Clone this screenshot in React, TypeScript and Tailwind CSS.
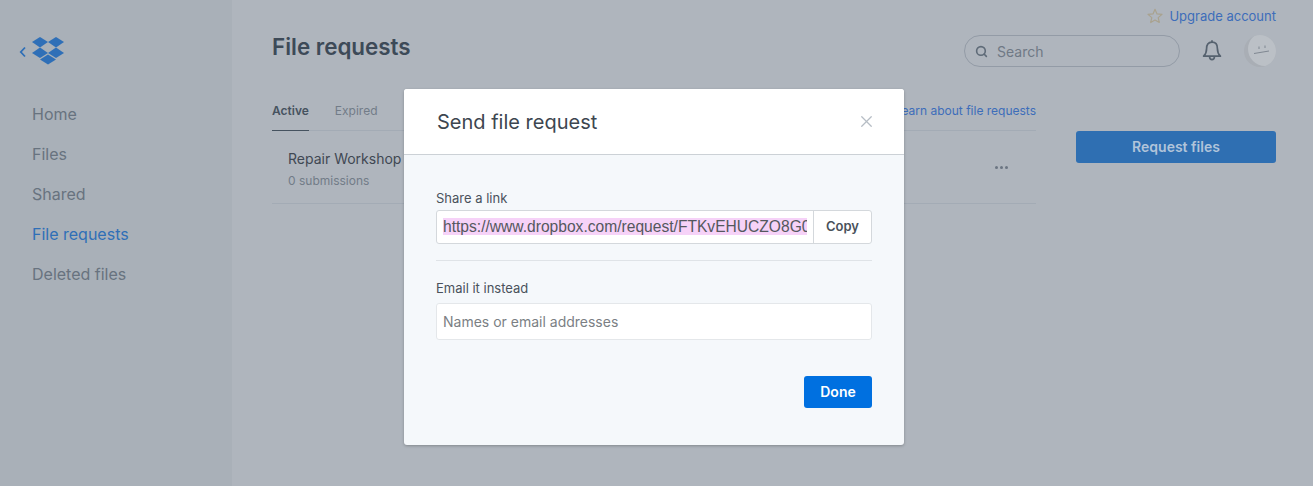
import { Search, X } from 'lucide-react';

const navItems = ['Home', 'Files', 'Shared', 'File requests', 'Deleted files'];

function DropboxLogo() {
  return (
    <svg width="32" height="28" viewBox="0 0 32 28" fill="#2f6fb7">
      <polygon points="8,0 16,5 8,10.5 0,5" />
      <polygon points="24,0 32,5 24,10.5 16,5" />
      <polygon points="8,10.5 16,16 8,21 0,16" />
      <polygon points="24,10.5 32,16 24,21 16,16" />
      <polygon points="16,17.5 24,22.5 16,27.5 8,22.5" />
    </svg>
  );
}

function Sidebar() {
  return (
    <aside className="flex h-full w-[232px] shrink-0 flex-col bg-[#a9b0b8] pl-[32px]">
      <div className="relative mt-[37px] h-[28px]">
        <svg className="absolute left-[-13px] top-[9px]" width="8" height="12" viewBox="0 0 8 12" fill="none">
          <path d="M6 1.5 L1.8 6 L6 10.5" stroke="#2f6fb7" strokeWidth="1.8" />
        </svg>
        <DropboxLogo />
      </div>
      <nav className="mt-[29px] flex flex-col">
        {navItems.map((item) => (
          <a
            key={item}
            className={`h-[40px] text-[16px] leading-[40px] ${item === 'File requests' ? 'text-[#2f6fb7]' : 'text-[#68737f]'}`}
          >
            {item}
          </a>
        ))}
      </nav>
    </aside>
  );
}

function TopRight() {
  return (
    <div className="flex flex-col items-end">
      <div className="mt-[7px] flex h-[18px] items-center gap-[6px]">
        <svg width="16" height="16" viewBox="0 0 16 16" fill="none">
          <path d="M8 1.3 L10 5.9 L15 6.4 L11.2 9.6 L12.3 14.5 L8 11.9 L3.7 14.5 L4.8 9.6 L1 6.4 L6 5.9 Z" stroke="#a9a28e" strokeWidth="1.2" strokeLinejoin="round" />
        </svg>
        <a className="text-[13px] leading-[18px] text-[#3d6dba]">Upgrade account</a>
      </div>
      <div className="mt-[10px] flex items-center">
        <div className="flex h-[32px] w-[216px] items-center rounded-full border border-[#939ba6] pl-[10px]">
          <Search size={13} strokeWidth={3} className="text-[#5f6b78]" />
          <span className="ml-[9px] text-[14px] text-[#6f7985]">Search</span>
        </div>
        <svg className="ml-[21px]" width="22" height="24" viewBox="0 0 22 24" fill="none" stroke="#56626f" strokeWidth="1.7">
          <path d="M11 3.2 C7 3.2 5.6 6.2 5.6 9.5 C5.6 13.5 4.6 15.3 2.6 17.2 L19.4 17.2 C17.4 15.3 16.4 13.5 16.4 9.5 C16.4 6.2 15 3.2 11 3.2 Z" strokeLinejoin="round" />
          <path d="M11 1.2 V3.2" />
          <path d="M8.6 18 C8.8 21.4 13.2 21.4 13.4 18" />
        </svg>
        <div className="relative ml-[21px] h-[32px] w-[32px] overflow-hidden rounded-full bg-[#a9aeb5]">
          <div className="absolute left-[4px] top-[-3px] h-[34px] w-[34px] rounded-full bg-[#bbc0c6]" />
          <svg className="absolute left-0 top-0" width="32" height="32" viewBox="0 0 32 32" fill="none" stroke="#7f8791" strokeWidth="1">
            <path d="M10 18.5 L25 16" />
            <path d="M15 11.5 V14" />
            <path d="M21 10.5 V13" />
          </svg>
        </div>
      </div>
    </div>
  );
}

function Main() {
  return (
    <main className="flex h-full flex-1 flex-col pl-[40px] pr-[37px]">
      <div className="flex h-[67px] items-start justify-between">
        <h1 className="mt-[32px] text-[22.4px] font-semibold leading-[29px] text-[#3d4a58]">File requests</h1>
        <TopRight />
      </div>
      <div className="mt-[29px] flex">
        <div className="w-[764px]">
          <div className="flex h-[35px] justify-between border-b border-[#a3abb5]">
            <div className="flex">
              <span className="h-[35px] border-b border-[#45525f] text-[12px] font-semibold leading-[29px] text-[#46525f]">Active</span>
              <span className="ml-[26px] text-[12px] leading-[29px] text-[#727c88]">Expired</span>
            </div>
            <a className="text-[12px] leading-[29px] text-[#3d6dba]">Learn about file requests</a>
          </div>
          <div className="flex h-[73px] items-start justify-between border-b border-[#a3abb5] pl-[16px] pr-[28px]">
            <div className="mt-[16px]">
              <div className="text-[14px] leading-[24px] text-[#3f4853]">Repair Workshop</div>
              <div className="mt-[1px] text-[12px] leading-[18px] text-[#727c88]">0 submissions</div>
            </div>
            <div className="mt-[35px] flex gap-[2px]">
              <span className="h-[3px] w-[3px] rounded-full bg-[#6b7582]" />
              <span className="h-[3px] w-[3px] rounded-full bg-[#6b7582]" />
              <span className="h-[3px] w-[3px] rounded-full bg-[#6b7582]" />
            </div>
          </div>
        </div>
        <button className="ml-[40px] mt-[35px] h-[32px] w-[200px] rounded-[3px] bg-[#2f6fb2] pb-[2px] text-[14px] font-semibold text-[#b1c4da]">
          Request files
        </button>
      </div>
    </main>
  );
}

function Modal() {
  return (
    <div className="absolute left-[404px] top-[89px] flex h-[356px] w-[500px] flex-col overflow-hidden rounded-[3px] bg-[#f5f8fb] shadow-[0_1px_3px_rgba(0,0,0,0.25)]">
      <div className="flex h-[66px] items-center justify-between border-b border-[#ccd1d6] bg-white pl-[33px] pr-[28px]">
        <h2 className="text-[20px] leading-[28px] text-[#3d4650]">Send file request</h2>
        <X size={19} strokeWidth={1.6} className="text-[#b6bdc5]" />
      </div>
      <div className="flex flex-1 flex-col px-[32px] pt-[34px]">
        <label className="text-[13px] leading-[18px] text-[#4a525b]">Share a link</label>
        <div className="mt-[3px] flex h-[34px] rounded-[3px] border border-[#d4d8dc] bg-white">
          <div className="flex flex-1 items-center pl-[6px] pr-[6px]">
            <span className="mt-[-1px] block h-[17px] w-[364px] overflow-hidden whitespace-nowrap bg-[#f6d2f8] font-['Liberation_Sans',sans-serif] text-[15.6px] leading-[18px] text-[#54585e]">
              https://www.dropbox.com/request/FTKvEHUCZO8G0k
            </span>
          </div>
          <div className="flex w-[58px] items-center justify-center border-l border-[#d4d8dc] text-[13px] font-semibold text-[#4a525b]">
            Copy
          </div>
        </div>
        <div className="mt-[16px] border-t border-[#dfe3e7]" />
        <label className="mt-[18px] text-[13px] leading-[18px] text-[#4a525b]">Email it instead</label>
        <div className="mt-[6px] flex h-[37px] items-center rounded-[3px] border border-[#e4e7ea] bg-white pl-[6px] text-[14px] text-[#7b7f84]">
          Names or email addresses
        </div>
        <div className="mt-[36px] flex justify-end">
          <button className="h-[32px] w-[68px] rounded-[3px] bg-[#0070e0] pb-[2px] text-[14px] font-semibold text-white">Done</button>
        </div>
      </div>
    </div>
  );
}

export default function App() {
  return (
    <div className="relative flex h-[486px] w-[1313px] overflow-hidden bg-[#afb5bd] font-['Inter','Liberation_Sans',sans-serif]">
      <Sidebar />
      <Main />
      <Modal />
    </div>
  );
}
